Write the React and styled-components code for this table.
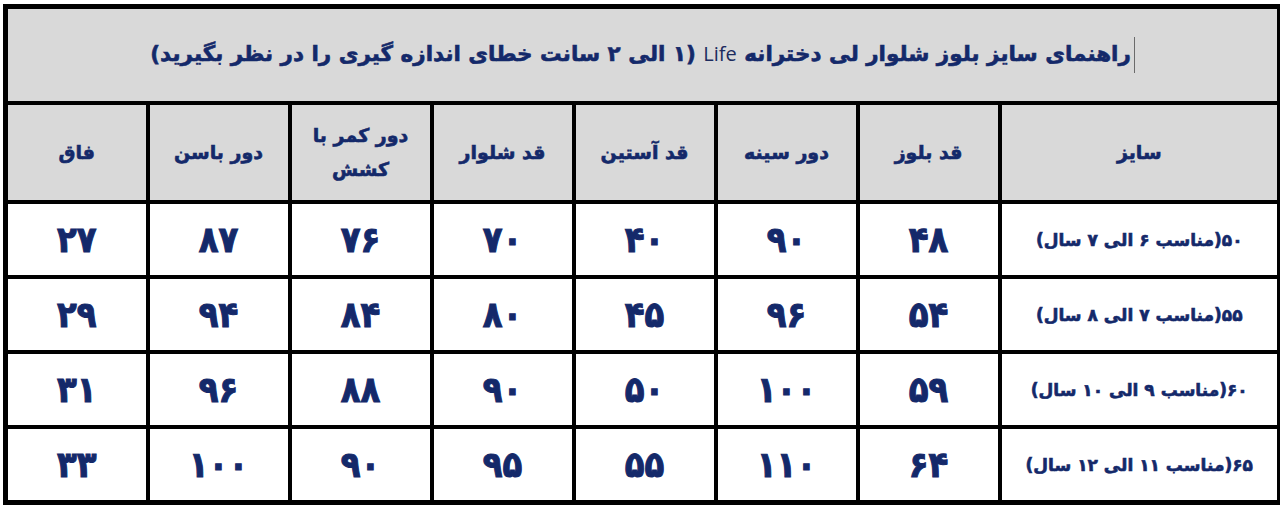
import React from "react";
import styled, { createGlobalStyle } from "styled-components";

const GlobalStyle = createGlobalStyle`
  html, body {
    margin: 0;
    padding: 0;
    background: #ffffff;
  }
  body {
    font-family: "DejaVu Sans", sans-serif;
  }
`;

const NAVY = "#14296a";

const columns = [
  { key: "size", title: ["سایز"], width: 280 },
  { key: "blouse", title: ["قد بلوز"], width: 142 },
  { key: "chest", title: ["دور سینه"], width: 142 },
  { key: "sleeve", title: ["قد آستین"], width: 142 },
  { key: "pants", title: ["قد شلوار"], width: 142 },
  { key: "waist", title: ["دور کمر با", "کشش"], width: 142 },
  { key: "hip", title: ["دور باسن"], width: 142 },
  { key: "crotch", title: ["فاق"], width: 142 },
];

const rows = [
  ["۵۰(مناسب ۶ الی ۷ سال)", "۴۸", "۹۰", "۴۰", "۷۰", "۷۶", "۸۷", "۲۷"],
  ["۵۵(مناسب ۷ الی ۸ سال)", "۵۴", "۹۶", "۴۵", "۸۰", "۸۴", "۹۴", "۲۹"],
  ["۶۰(مناسب ۹ الی ۱۰ سال)", "۵۹", "۱۰۰", "۵۰", "۹۰", "۸۸", "۹۶", "۳۱"],
  ["۶۵(مناسب ۱۱ الی ۱۲ سال)", "۶۴", "۱۱۰", "۵۵", "۹۵", "۹۰", "۱۰۰", "۳۳"],
];

const Page = styled.div`
  padding: 4px 3px 2px 3px;
`;

const Table = styled.table`
  width: 1274px;
  table-layout: fixed;
  border-collapse: collapse;
  border: 5px solid #000;
  direction: rtl;
`;

const TitleCell = styled.th`
  height: 92px;
  background: #d9d9d9;
  border: 4px solid #000;
  color: ${NAVY};
  font-size: 21.5px;
  font-weight: 700;
  -webkit-text-stroke: 0.6px ${NAVY};
  text-align: center;
  vertical-align: middle;
  padding: 0;
`;

const Latin = styled.span`
  font-family: "Open Sans", "Liberation Sans", sans-serif;
  font-weight: 400;
  font-size: 20px;
  color: #1c2b5e;
  -webkit-text-stroke: 0;
`;

const Caret = styled.span`
  display: inline-block;
  width: 1px;
  height: 36px;
  margin-left: 3px;
  background: #6b6b6b;
  vertical-align: middle;
`;

const HeadCell = styled.th`
  height: 95px;
  background: #d9d9d9;
  border: 4px solid #000;
  color: ${NAVY};
  font-size: 19px;
  font-weight: 700;
  -webkit-text-stroke: 0.6px ${NAVY};
  line-height: 1.75;
  text-align: center;
  vertical-align: middle;
  padding: 0;
`;

const Cell = styled.td`
  height: 71px;
  background: #ffffff;
  border: 4px solid #000;
  color: ${NAVY};
  font-family: ${(p) =>
    p.$wide ? '"DejaVu Sans", sans-serif' : '"DejaVu Sans Condensed", "DejaVu Sans", sans-serif'};
  font-size: ${(p) => (p.$wide ? "17px" : "36px")};
  font-weight: 700;
  -webkit-text-stroke: ${(p) => (p.$wide ? "0.6px" : "1px")} ${NAVY};
  text-align: center;
  vertical-align: middle;
  padding: 0;
`;

export default function App() {
  return (
    <Page>
      <GlobalStyle />
      <Table>
        <colgroup>
          {columns.map((c) => (
            <col key={c.key} style={{ width: `${c.width}px` }} />
          ))}
        </colgroup>
        <thead>
          <tr>
            <TitleCell colSpan={columns.length}>
              <Caret />
              راهنمای سایز بلوز شلوار لی دخترانه <Latin>Life</Latin> (۱ الی ۲
              سانت خطای اندازه گیری را در نظر بگیرید)
            </TitleCell>
          </tr>
          <tr>
            {columns.map((c) => (
              <HeadCell key={c.key}>
                {c.title.map((line, i) => (
                  <React.Fragment key={i}>
                    {i > 0 && <br />}
                    {line}
                  </React.Fragment>
                ))}
              </HeadCell>
            ))}
          </tr>
        </thead>
        <tbody>
          {rows.map((r, i) => (
            <tr key={i}>
              {r.map((v, j) => (
                <Cell key={j} $wide={j === 0}>
                  {v}
                </Cell>
              ))}
            </tr>
          ))}
        </tbody>
      </Table>
    </Page>
  );
}
